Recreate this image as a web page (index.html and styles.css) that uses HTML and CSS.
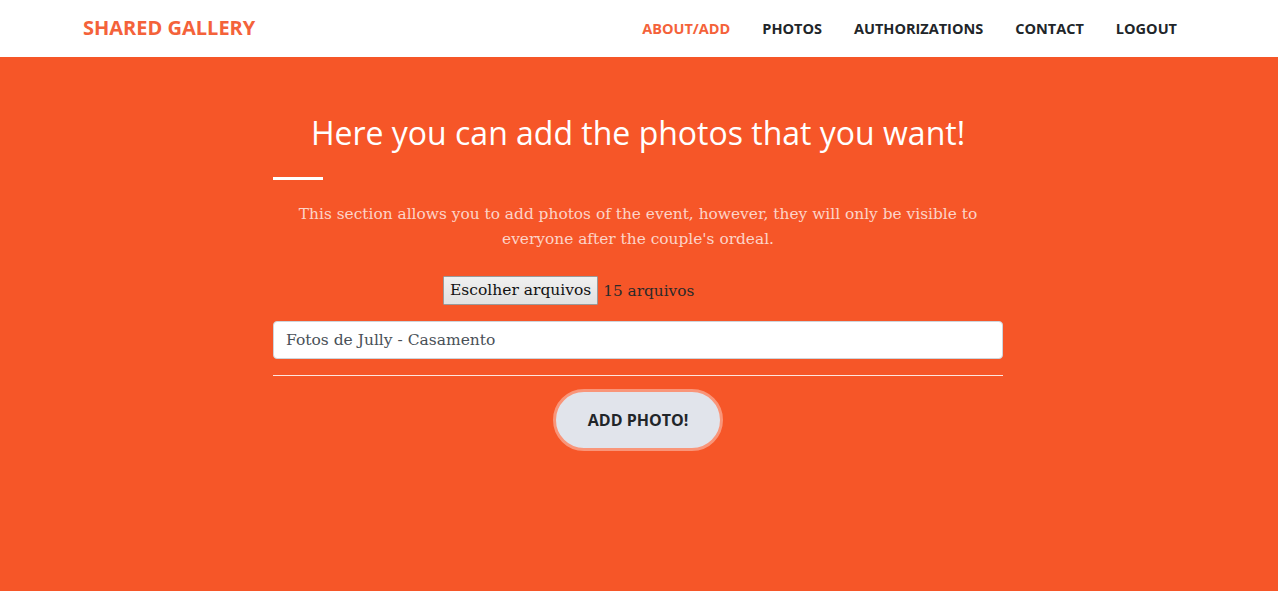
FILE: index.html
```html
<!DOCTYPE html>
<html lang="en">
<head>
<meta charset="utf-8">
<title>Shared Gallery</title>
<link rel="stylesheet" href="styles.css">
</head>
<body>
<nav class="navbar">
  <a class="brand" href="#">SHARED GALLERY</a>
  <ul class="nav">
    <li><a class="active" href="#">ABOUT/ADD</a></li>
    <li><a href="#">PHOTOS</a></li>
    <li><a href="#">AUTHORIZATIONS</a></li>
    <li><a href="#">CONTACT</a></li>
    <li><a href="#">LOGOUT</a></li>
  </ul>
</nav>
<section class="hero">
  <div class="col">
    <h2 class="title">Here you can add the photos that you want!</h2>
    <div class="divider"></div>
    <p class="lead">This section allows you to add photos of the event, however, they will only be visible to everyone after the couple's ordeal.</p>
    <div class="file-row">
      <div class="file"><span class="file-btn">Escolher arquivos</span><span class="file-text">15 arquivos</span></div>
    </div>
    <div class="input">Fotos de Jully - Casamento</div>
    <div class="rule"></div>
    <div class="btn-row"><button class="btn">ADD PHOTO!</button></div>
  </div>
</section>
</body>
</html>
```
FILE: styles.css
```css
* { box-sizing: border-box; }
html, body { margin: 0; padding: 0; }
body {
  font-family: "DejaVu Serif", "Liberation Serif", serif;
  background: #f65628;
  height: 591px;
  overflow: hidden;
}
.navbar {
  height: 57px;
  background: #fff;
  display: flex;
  align-items: center;
  justify-content: space-between;
  padding: 0 101px 0 83px;
}
.brand {
  font-family: "Open Sans", sans-serif;
  font-weight: 700;
  font-size: 20px;
  color: #f4623a;
  text-decoration: none;
  margin-top: -2px;
}
.nav {
  list-style: none;
  margin: 0;
  padding: 0;
  display: flex;
  gap: 32px;
}
.nav a {
  display: block;
  font-family: "Open Sans", sans-serif;
  font-weight: 700;
  font-size: 14.5px;
  color: #212529;
  text-decoration: none;
}
.nav a.active { color: #f4623a; }
.hero {
  display: flex;
  justify-content: center;
  padding-top: 56px;
}
.col {
  width: 730px;
  margin-right: 2px;
  text-align: center;
}
.title {
  font-family: "Open Sans", sans-serif;
  font-weight: 400;
  font-size: 32px;
  line-height: 40px;
  color: #fff;
  margin: 0;
}
.divider {
  width: 50px;
  height: 3px;
  background: #fff;
  margin: 24px 0 0 0;
}
.lead {
  font-size: 15.4px;
  line-height: 25px;
  color: rgba(255,255,255,0.75);
  margin: 22px 0 0 0;
}
.file-row {
  margin-top: 24px;
  display: flex;
  justify-content: center;
}
.file {
  width: 390px;
  display: flex;
  align-items: center;
  text-align: left;
}
.file-btn {
  display: inline-block;
  height: 29px;
  line-height: 27px;
  padding: 0 6px;
  font-family: "DejaVu Serif", serif;
  font-size: 15.5px;
  color: #111;
  background: linear-gradient(#f0f0f0, #e1e1e1);
  border: 1px solid #9a9a9a;
  border-radius: 1px;
}
.file-text {
  margin-left: 5px;
  font-size: 15.3px;
  color: #2a2a2a;
}
.input {
  margin-top: 16px;
  height: 38px;
  background: #fff;
  border: 1px solid #ced4da;
  border-radius: 4px;
  text-align: left;
  padding: 0 12px;
  line-height: 36px;
  font-size: 15.5px;
  color: #495057;
}
.rule {
  margin-top: 16px;
  height: 1px;
  background: rgba(255,255,255,0.85);
}
.btn-row {
  margin-top: 13px;
  display: flex;
  justify-content: center;
}
.btn {
  width: 170px;
  height: 62px;
  border-radius: 31px;
  background: #e1e4eb;
  border: 3px solid #f99579;
  font-family: "Open Sans", sans-serif;
  font-weight: 700;
  font-size: 16px;
  color: #212529;
  padding: 0;
}
```
